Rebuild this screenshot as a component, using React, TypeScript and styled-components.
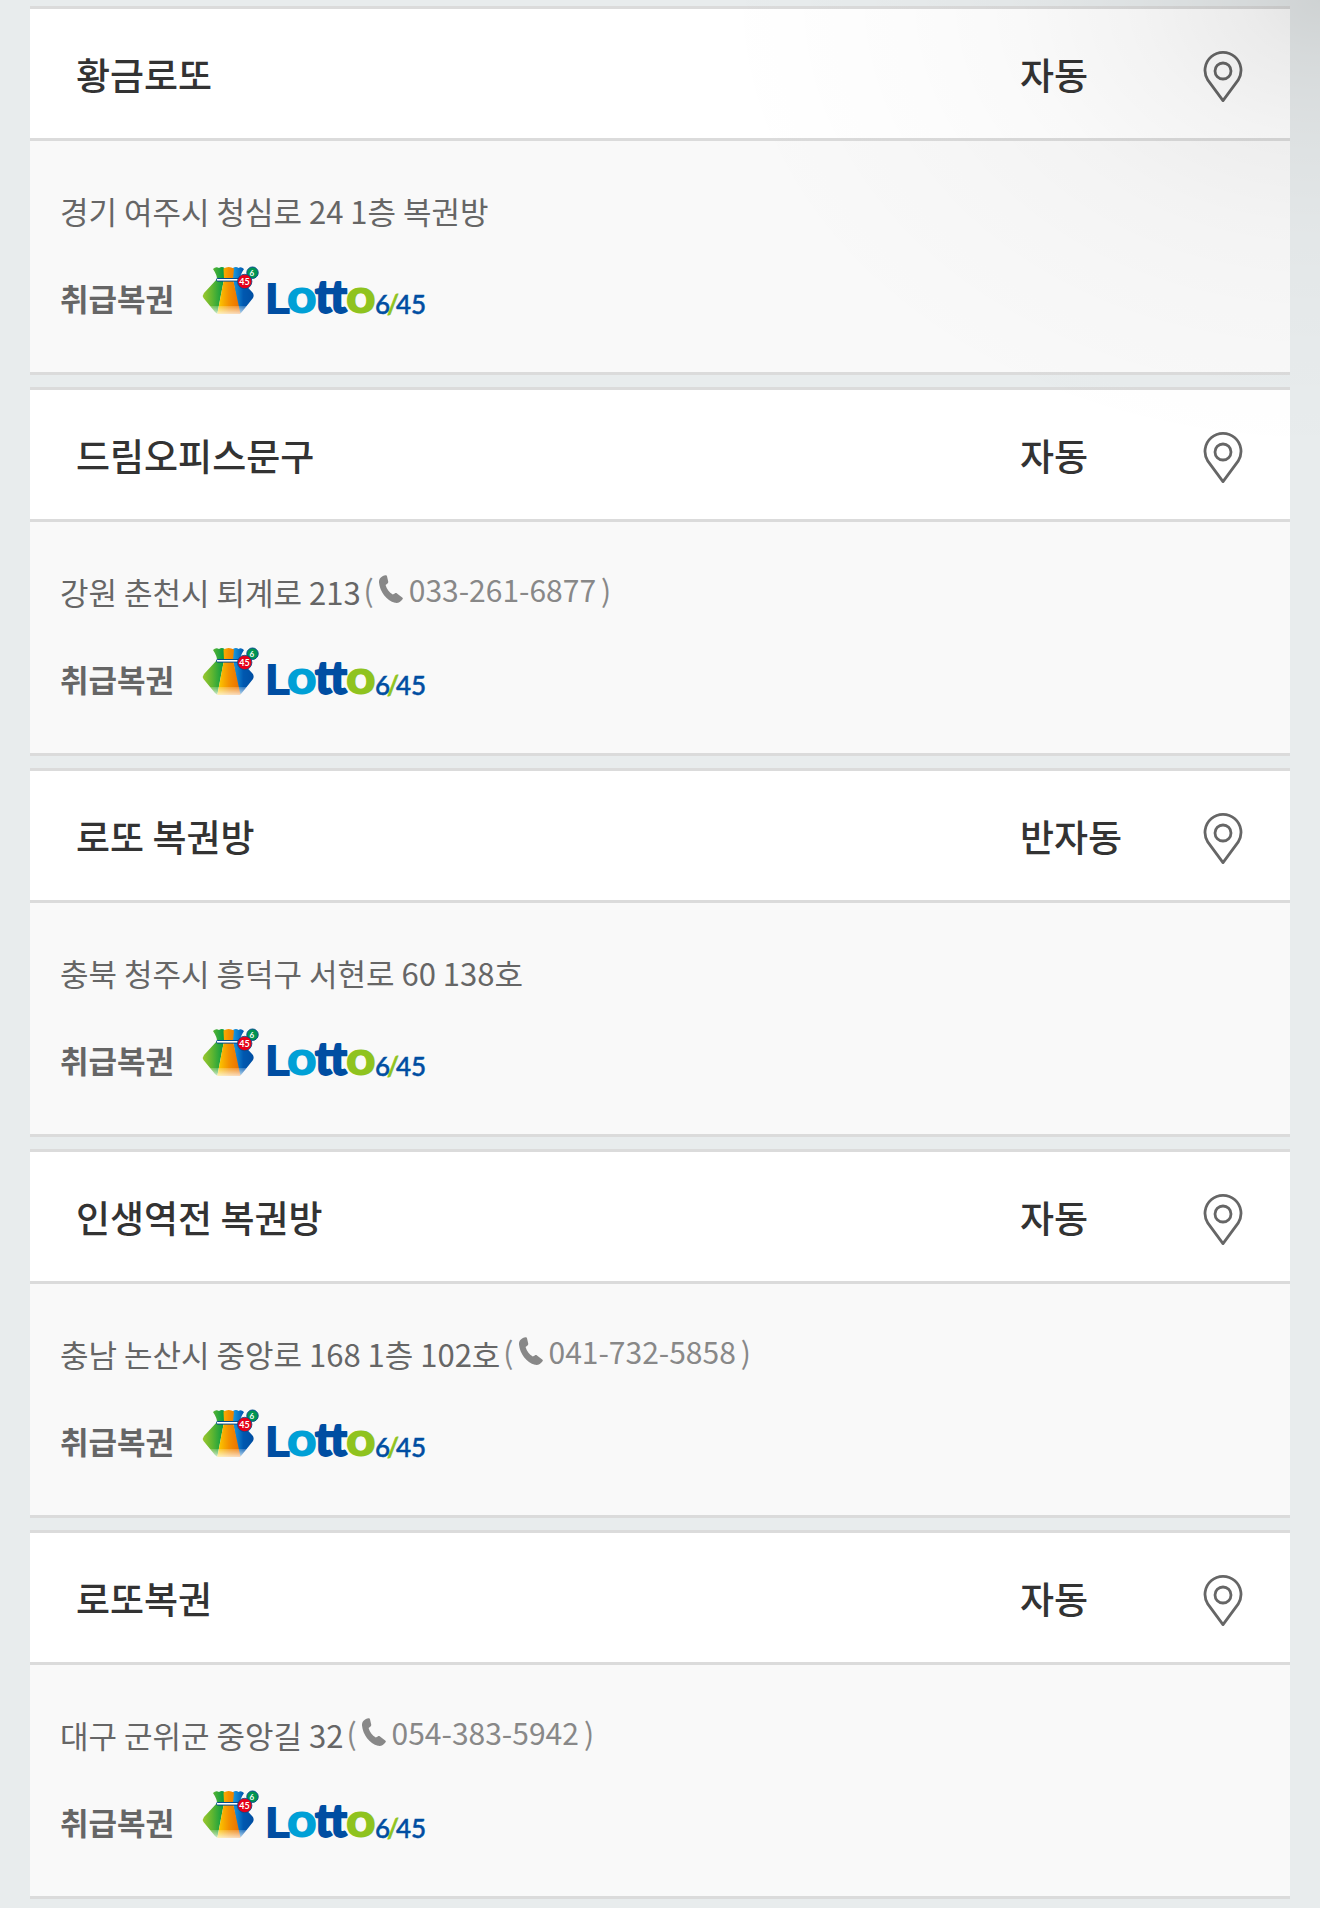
import React from "react";
import styled, { createGlobalStyle } from "styled-components";

const GlobalStyle = createGlobalStyle`
  *, *::before, *::after { box-sizing: border-box; }
  body {
    margin: 0;
    background: #e8eced;
    color: #333;
    font-family: "Noto Sans CJK KR", "Noto Sans", sans-serif;
  }
`;

const Page = styled.main`
  position: relative;
  padding: 6px 30px 12px;
`;

const CornerShade = styled.div`
  position: absolute;
  top: 0;
  right: 0;
  width: 46%;
  height: 460px;
  pointer-events: none;
  background: radial-gradient(
    ellipse 100% 100% at top right,
    rgba(0, 0, 0, 0.11) 0%,
    rgba(0, 0, 0, 0.08) 12%,
    rgba(0, 0, 0, 0.046) 30%,
    rgba(0, 0, 0, 0.024) 50%,
    rgba(0, 0, 0, 0.01) 70%,
    rgba(0, 0, 0, 0) 100%
  );
`;

const ShopList = styled.ul`
  display: flex;
  flex-direction: column;
  gap: 12px;
  margin: 0;
  padding: 0;
  list-style: none;
`;

const ShopCard = styled.li`
  border-top: 3px solid #dbdbdb;
  border-bottom: 3px solid #dbdbdb;
  background: #f9f9f9;
`;

const ShopHeader = styled.header`
  display: grid;
  grid-template-columns: 1fr 183px 40px;
  align-items: center;
  min-height: 132px;
  padding: 0 47px 0 46px;
  border-bottom: 3px solid #dbdbdb;
  background: #fff;
`;

const ShopName = styled.h2`
  margin: 0;
  font-size: 37px;
  font-weight: 500;
  line-height: 52px;
`;

const PickType = styled.span`
  font-size: 37px;
  font-weight: 500;
  line-height: 52px;
`;

const MapButton = styled.button`
  display: flex;
  padding: 6px 0 0;
  border: 0;
  background: none;
  cursor: pointer;
`;

const ShopDetail = styled.div`
  display: flex;
  flex-direction: column;
  gap: 34px;
  padding: 50px 30px 57px;
`;

const AddressRow = styled.div`
  display: flex;
  align-items: flex-start;
  gap: 3px;
  color: #666;
  font-size: 31px;
  line-height: 40px;
`;

const Phone = styled.span`
  display: flex;
  align-items: center;
  gap: 5px;
  color: #888;
  font-size: 30px;
  line-height: 34px;
`;

const PhoneLink = styled.a`
  display: flex;
  align-items: center;
  gap: 6px;
  color: inherit;
  text-decoration: none;
`;

const TicketRow = styled.div`
  display: flex;
  align-items: flex-end;
  gap: 28px;
`;

const TicketLabel = styled.strong`
  color: #666;
  font-size: 31px;
  font-weight: 700;
  line-height: 34px;
`;

const Logo = styled.svg`
  overflow: visible;
`;

function PinIcon() {
  return (
    <svg width="40" height="52" viewBox="0 0 40 52" fill="none" stroke="#666" strokeWidth="2.8" aria-hidden="true">
      <path d="M20 49.6 L4.9 29.2 A18 18 0 1 1 35.1 29.2 Z" strokeLinejoin="round" />
      <circle cx="20" cy="20" r="8" />
    </svg>
  );
}

function PhoneIcon() {
  return (
    <svg width="24" height="28" viewBox="0 0 24 28" fill="#888" aria-hidden="true">
      <path d="M6.6 0.2 C7.4 0 7.8 .4 8 1.2 L9.2 6.6 C9.4 7.6 9 8.2 8.2 8.7 L6.6 9.9 C7.8 14 10.2 17.2 13.8 19.4 L15.8 18.4 C16.6 18 17.3 18 18 18.6 L23.2 22.4 C24 23 24 23.6 23.5 24.3 C21.6 27 19 28.4 16 27.8 C7.4 25.6 .8 16.4 0 7.4 C-.2 3.6 2.4 1 6.6 .2 Z" />
    </svg>
  );
}

function LottoLogo({ id }: { id: string }) {
  return (
    <Logo width="224" height="50" viewBox="202 265 224 50" role="img" aria-label="Lotto 6/45">
      <defs>
        <linearGradient id={`${id}-green`}>
          <stop offset="0" stopColor="#9cc72e" />
          <stop offset="0.45" stopColor="#5cb531" />
          <stop offset="1" stopColor="#009944" />
        </linearGradient>
        <linearGradient id={`${id}-orange`}>
          <stop offset="0" stopColor="#fdd000" />
          <stop offset="0.5" stopColor="#f39000" />
          <stop offset="1" stopColor="#ea6d00" />
        </linearGradient>
        <linearGradient id={`${id}-blue`}>
          <stop offset="0" stopColor="#1b9be0" />
          <stop offset="0.5" stopColor="#0058b0" />
          <stop offset="1" stopColor="#004ea2" />
        </linearGradient>
        <linearGradient id={`${id}-fade`} x1="0" y1="0" x2="0" y2="1">
          <stop offset="0" stopColor="#fff" stopOpacity="0.2" />
          <stop offset="1" stopColor="#fff" stopOpacity="0.75" />
        </linearGradient>
      </defs>
      <path d="M213 269 Q216 266 219 268 Q222 266 224.500 268 L224 279 L217.300 314 L215 312 L203.500 298 Q202 295.500 204 293 L217 279 Q217 275 213 269 Z" fill={`url(#${id}-green)`} />
      <path d="M233 268 Q236 266 238.500 268 Q241 266 244 269 Q240 275 240 279 L252.500 292.500 Q254.500 295 253 298 L241 313 L239 314 L233 279 Z" fill={`url(#${id}-blue)`} />
      <path d="M223.500 268.500 Q228.500 265.500 234 268.500 L233 279 L240.500 314 L217.300 314 L224 279 Z" fill={`url(#${id}-orange)`} />
      <path d="M209.500 306 H247 L241 314 H216 Z" fill={`url(#${id}-fade)`} />
      <rect x="216.500" y="278.500" width="24" height="2.600" rx="1" fill="#fff" stroke="#004b8d" strokeWidth="1" />
      <circle cx="252.500" cy="272.700" r="5.700" fill="#009550" stroke="#004b8d" strokeWidth="1" />
      <circle cx="244.700" cy="281.500" r="7.200" fill="#e50019" stroke="#004b8d" strokeWidth="0.800" />
      <g fontFamily="Lato, sans-serif" fontWeight="700" fill="#fff" textAnchor="middle">
        <text x="251.800" y="275.600" fontSize="8">6</text>
        <text x="244.400" y="284.500" fontSize="9">45</text>
      </g>
      <g fontFamily="DejaVu Sans, sans-serif" fontWeight="700">
        <text x="264" y="313.700" fontSize="42" fill="#004ea2">L</text>
        <text x="286" y="313.300" fontSize="46" fill="#00a0d6">o</text>
        <text x="345" y="313.300" fontSize="46" fill="#8fc31f">o</text>
      </g>
      <text x="315" y="312.800" fontFamily="Lato, sans-serif" fontWeight="900" fontSize="45" fill="#004ea2" stroke="#004ea2" strokeWidth="1.8" strokeLinejoin="round">tt</text>
      <g fontFamily="Lato, sans-serif" fontWeight="500" fontSize="26">
        <text x="375" y="313.700" fill="#004ea2" stroke="#004ea2" strokeWidth="0.5">6</text>
        <text x="387" y="313.700" fill="#8fc31f" stroke="#8fc31f" strokeWidth="0.8">/</text>
        <text x="396" y="313.700" fill="#004ea2" stroke="#004ea2" strokeWidth="0.5">45</text>
      </g>
    </Logo>
  );
}

interface Shop {
  name: string;
  type: string;
  address: string;
  phone?: string;
}

const shops: Shop[] = [
  { name: "황금로또", type: "자동", address: "경기 여주시 청심로 24 1층 복권방" },
  { name: "드림오피스문구", type: "자동", address: "강원 춘천시 퇴계로 213", phone: "033-261-6877" },
  { name: "로또 복권방", type: "반자동", address: "충북 청주시 흥덕구 서현로 60 138호" },
  { name: "인생역전 복권방", type: "자동", address: "충남 논산시 중앙로 168 1층 102호", phone: "041-732-5858" },
  { name: "로또복권", type: "자동", address: "대구 군위군 중앙길 32", phone: "054-383-5942" },
];

export default function App() {
  return (
    <>
      <GlobalStyle />
      <Page>
        <ShopList>
          {shops.map((shop, index) => (
            <ShopCard key={shop.name}>
              <ShopHeader>
                <ShopName>{shop.name}</ShopName>
                <PickType>{shop.type}</PickType>
                <MapButton type="button" aria-label={`${shop.name} 지도`}>
                  <PinIcon />
                </MapButton>
              </ShopHeader>
              <ShopDetail>
                <AddressRow>
                  <span>{shop.address}</span>
                  {shop.phone && (
                    <Phone>
                      <span>(</span>
                      <PhoneLink href={`tel:${shop.phone}`}>
                        <PhoneIcon />
                        {shop.phone}
                      </PhoneLink>
                      <span>)</span>
                    </Phone>
                  )}
                </AddressRow>
                <TicketRow>
                  <TicketLabel>취급복권</TicketLabel>
                  <LottoLogo id={`lotto-${index}`} />
                </TicketRow>
              </ShopDetail>
            </ShopCard>
          ))}
        </ShopList>
        <CornerShade />
      </Page>
    </>
  );
}
